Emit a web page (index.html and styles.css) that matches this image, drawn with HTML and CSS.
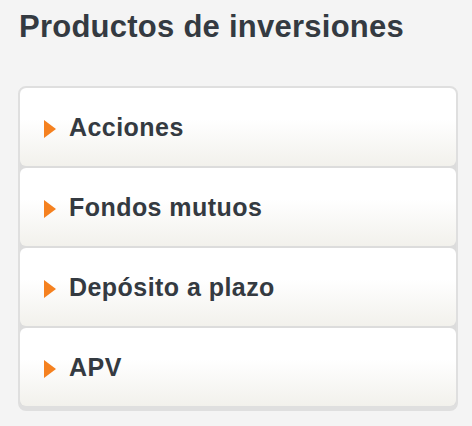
FILE: index.html
```html
<!DOCTYPE html>
<html lang="es">
<head>
  <meta charset="UTF-8" />
  <meta name="viewport" content="width=device-width, initial-scale=1.0" />
  <title>Productos de inversiones</title>
  <link rel="stylesheet" href="styles.css">
</head>
<body>
  <h1 class="title">Productos de inversiones</h1>

  <ul class="menu">
    <li class="item"><span class="arrow"></span>Acciones</li>
    <li class="item"><span class="arrow"></span>Fondos mutuos</li>
    <li class="item"><span class="arrow"></span>Depósito a plazo</li>
    <li class="item"><span class="arrow"></span>APV</li>
  </ul>
</body>
</html>
```

FILE: styles.css
```css
body {
  margin: 0;
  padding: 9px 14px 0 18px;
  background: #f4f4f4;
  font-family: "Liberation Sans", Arial, sans-serif;
  color: #343a41;
}

.title {
  margin: 0 0 41px 1px;
  font-size: 31px;
  line-height: 36px;
  font-weight: bold;
  letter-spacing: 0.25px;
}

.menu {
  list-style: none;
  margin: 0;
  padding: 0;
  width: 436px;
  display: flex;
  flex-direction: column;
  gap: 2px;
  background: #dcdcdc;
  border: 2px solid #dfdfdf;
  border-bottom-width: 5px;
  border-radius: 8px;
}

.item {
  height: 78px;
  display: flex;
  align-items: center;
  gap: 13px;
  padding-left: 24px;
  border-radius: 6px;
  background: linear-gradient(to bottom, #ffffff 0%, #ffffff 40%, #f2f1ec 100%);
  font-size: 25px;
  line-height: 30px;
  font-weight: bold;
  letter-spacing: 0.45px;
  cursor: pointer;
}

.arrow {
  width: 0;
  height: 0;
  margin-top: 4px;
  border-top: 9px solid transparent;
  border-bottom: 9px solid transparent;
  border-left: 12px solid #f5811f;
}
```
